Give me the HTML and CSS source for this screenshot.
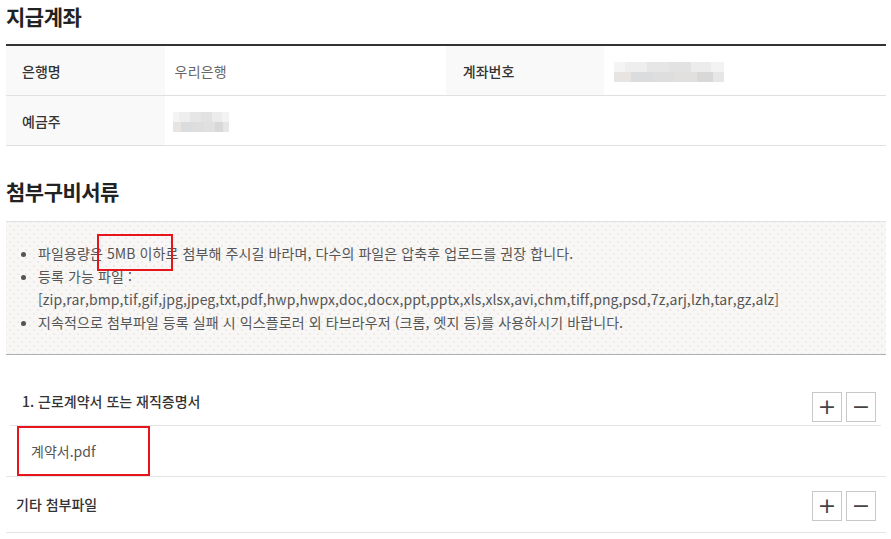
FILE: index.html
```html
<!DOCTYPE html>
<html lang="ko">
<head>
  <meta charset="utf-8">
  <title>지급계좌</title>
  <link rel="stylesheet" href="styles.css">
</head>
<body>
  <div class="page">
    <h2 class="section-title">지급계좌</h2>
    <table class="info-table">
      <colgroup>
        <col class="col-th">
        <col class="col-td">
        <col class="col-th">
        <col class="col-td">
      </colgroup>
      <tr>
        <th>은행명</th>
        <td>우리은행</td>
        <th class="th-mid">계좌번호</th>
        <td><span class="masked masked-long"></span></td>
      </tr>
      <tr>
        <th>예금주</th>
        <td colspan="3"><span class="masked masked-short"></span></td>
      </tr>
    </table>

    <h2 class="section-title second">첨부구비서류</h2>
    <div class="notice">
      <ul>
        <li>파일용량은 <span class="mark">5MB 이하</span>로 첨부해 주시길 바라며, 다수의 파일은 압축후 업로드를 권장 합니다.</li>
        <li>등록 가능 파일 :<br>[zip,rar,bmp,tif,gif,jpg,jpeg,txt,pdf,hwp,hwpx,doc,docx,ppt,pptx,xls,xlsx,avi,chm,tiff,png,psd,7z,arj,lzh,tar,gz,alz]</li>
        <li>지속적으로 첨부파일 등록 실패 시 익스플로러 외 타브라우저 (크롬, 엣지 등)를 사용하시기 바랍니다.</li>
      </ul>
    </div>

    <div class="file-group">
      <div class="group-inner">
        <div class="group-head">
          <span class="group-name">1. 근로계약서 또는 재직증명서</span>
          <div class="btns">
            <button class="btn-sq">+</button>
            <button class="btn-sq">&minus;</button>
          </div>
        </div>
      </div>
      <div class="file-row">
        <span class="file-name mark-box">계약서.pdf</span>
      </div>
      <div class="group-head other">
        <span class="group-name">기타 첨부파일</span>
        <div class="btns">
          <button class="btn-sq">+</button>
          <button class="btn-sq">&minus;</button>
        </div>
      </div>
    </div>
  </div>
</body>
</html>
```
FILE: styles.css
```css
body {
  margin: 0;
  background: #fff;
  font-family: "Noto Sans CJK KR", "Noto Sans", sans-serif;
  color: #333;
}
.page {
  width: 880px;
  margin-left: 6px;
}
.section-title {
  margin: -1px 0 0 0;
  height: 45px;
  font-size: 21px;
  font-weight: bold;
  color: #222;
  line-height: 34px;
  letter-spacing: -0.5px;
}
.section-title.second {
  margin-top: 0;
  padding-top: 30px;
  line-height: 30px;
  box-sizing: border-box;
  height: 75px;
}
.info-table {
  width: 100%;
  border-collapse: collapse;
  border-top: 2px solid #333;
  font-size: 14px;
}
.col-th { width: 159px; }
.col-td { width: 282px; }
.info-table th,
.info-table td {
  height: 49px;
  padding: 0;
  border-bottom: 1px solid #e0e0e0;
  text-align: left;
  vertical-align: middle;
}
.info-table th {
  background: #f9f9f9;
  font-weight: 500;
  color: #333;
  padding-left: 16px;
}
.info-table th.th-mid {
  padding-left: 17px;
}
.info-table td {
  color: #666;
  padding-left: 10px;
  letter-spacing: 0.2px;
}
.masked {
  display: inline-block;
  height: 20px;
  vertical-align: middle;
  background:
    linear-gradient(90deg, #f4f4f4 0 10%, #eeeeee 10% 30%, #e6e6e6 30% 50%, #e2e2e2 50% 70%, #ececec 70% 88%, #f3f3f3 88%) top / 100% 50% no-repeat,
    linear-gradient(90deg, #e8e4e2 0 15%, #dadcde 15% 35%, #dedede 35% 55%, #e2e0de 55% 75%, #d8d8d8 75% 90%, #e6e6e6 90%) bottom / 100% 50% no-repeat;
}
.masked-long {
  width: 110px;
}
.masked-short {
  width: 56px;
  margin-left: -2px;
}
.notice {
  border-top: 1px solid #e2e2e2;
  border-bottom: 1px solid #b0b0b0;
  background-color: #f8f7f5;
  background-image:
    radial-gradient(#ecebe8 1px, transparent 1.2px),
    radial-gradient(#ecebe8 1px, transparent 1.2px);
  background-size: 8px 8px;
  background-position: 0 0, 4px 4px;
  padding: 20px 0;
}
.notice ul {
  margin: 0;
  padding: 0 0 0 32px;
  font-size: 14px;
  line-height: 23px;
  color: #555;
  letter-spacing: 0.1px;
}
.mark {
  outline: 2px solid #e8141b;
  padding: 7px 5px 6px 8px;
  margin: 0 -5px 0 -8px;
}
.file-group {
  margin-top: 27px;
}
.group-inner {
  margin: 0 5px 0 4px;
}
.group-head {
  display: flex;
  align-items: center;
  justify-content: space-between;
  height: 43px;
  border-bottom: 1px solid #e4e4e4;
  padding: 0 5px 0 12px;
}
.group-name {
  font-size: 14px;
  font-weight: 500;
  color: #333;
  margin-top: -6px;
}
.btns {
  display: flex;
  gap: 4px;
  margin-top: 6px;
}
.btn-sq {
  width: 30px;
  height: 30px;
  border: 1px solid #c8c8c8;
  background: #fff;
  color: #444;
  font-size: 22px;
  font-family: "DejaVu Sans", sans-serif;
  line-height: 26px;
  padding: 0;
  cursor: pointer;
}
.file-row {
  height: 50px;
  border-bottom: 1px solid #e4e4e4;
  display: flex;
  align-items: stretch;
  padding-left: 11px;
}
.file-name {
  font-size: 14px;
  color: #555;
  display: flex;
  align-items: center;
  width: 133px;
  box-sizing: border-box;
  padding-left: 14px;
}
.mark-box {
  outline: 2px solid #e8141b;
  outline-offset: -2px;
}
.group-head.other {
  height: 55px;
  padding: 0 10px;
}
.group-head.other .group-name {
  margin-top: -2px;
}
.group-head.other .btns {
  margin-top: 2px;
}
```
